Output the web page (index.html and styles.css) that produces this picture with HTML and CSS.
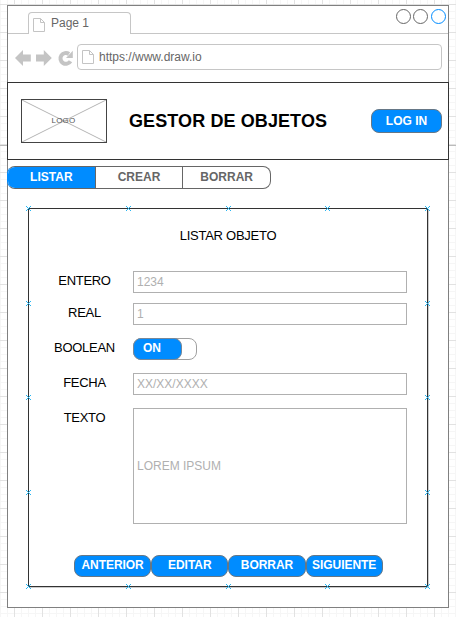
FILE: index.html
```html
<!DOCTYPE html>
<html lang="es">
<head>
<meta charset="utf-8">
<title>Gestor de objetos</title>
<link rel="stylesheet" href="styles.css">
</head>
<body>
<main class="window">
  <div class="tabstrip">
    <div class="tab">
      <svg class="doc" width="12" height="14" viewBox="0 0 12 14"><path d="M.5.5H7.5L11.5 4.500V13.500H.5ZM7.500.5V4.500H11.500"/></svg>
      <span>Page 1</span>
    </div>
    <div class="controls"><i class="dot"></i><i class="dot"></i><i class="dot dot-blue"></i></div>
  </div>
  <div class="toolbar">
    <svg class="nav" width="60" height="18" viewBox="0 0 60 18">
      <path d="M0 9L8 1V5.500H15.800V12.500H8V17Z"/>
      <path d="M36.800 9L28.800 1V5.500H21V12.500H28.800V17Z"/>
      <path class="arc" d="M55.500 12.200A5.400 5.400 0 1 1 54 5"/>
      <path d="M57.800 1.800V9H51Z"/>
    </svg>
    <div class="address">
      <svg class="doc" width="12" height="14" viewBox="0 0 12 14"><path d="M.5.5H7.500L11.500 4.500V13.500H.5ZM7.500.5V4.500H11.500"/></svg>
      <span>https://www.draw.io</span>
    </div>
  </div>
  <header class="header">
    <div class="logo">
      <svg class="cross" width="84" height="42" viewBox="0 0 84 42"><path d="M0 0L84 42M0 42L84 0"/></svg>
      <span>LOGO</span>
    </div>
    <h1>GESTOR DE OBJETOS</h1>
    <button class="btn login">LOG IN</button>
  </header>
  <nav class="segments">
    <a class="seg active">LISTAR</a><a class="seg">CREAR</a><a class="seg">BORRAR</a>
  </nav>
  <section class="panel">
    <h2>LISTAR OBJETO</h2>
    <form class="form">
      <label>ENTERO</label><div class="field">1234</div>
      <label>REAL</label><div class="field">1</div>
      <label>BOOLEAN</label><div class="toggle"><b>ON</b></div>
      <label>FECHA</label><div class="field">XX/XX/XXXX</div>
      <label>TEXTO</label><div class="field area">LOREM IPSUM</div>
    </form>
    <div class="actions">
      <button class="btn">ANTERIOR</button><button class="btn">EDITAR</button><button class="btn">BORRAR</button><button class="btn">SIGUIENTE</button>
    </div>
    <svg class="anchors" width="406" height="386" viewBox="-3 -3 406 386">
      <defs><path id="a" d="M-2.500-2.500L2.500 2.500M-2.500 2.500L2.500-2.500"/></defs>
      <use href="#a" x=".5" y=".5"/><use href="#a" x="100.500" y=".5"/><use href="#a" x="200.500" y=".5"/><use href="#a" x="299.500" y=".5"/><use href="#a" x="399.500" y=".5"/>
      <use href="#a" x=".5" y="95.500"/><use href="#a" x=".5" y="189.500"/><use href="#a" x=".5" y="284.500"/>
      <use href="#a" x="399.500" y="95.500"/><use href="#a" x="399.500" y="189.500"/><use href="#a" x="399.500" y="284.500"/>
      <use href="#a" x=".5" y="378.500"/><use href="#a" x="100.500" y="378.500"/><use href="#a" x="200.500" y="378.500"/><use href="#a" x="299.500" y="378.500"/><use href="#a" x="399.500" y="378.500"/>
    </svg>
  </section>
</main>
</body>
</html>
```

FILE: styles.css
```css
* { box-sizing: border-box; }
html, body { margin: 0; }
body {
  height: 617px;
  padding: 5px 0 0 7px;
  overflow: hidden;
  font: 12px/14px "Liberation Sans", Arial, sans-serif;
  background-color: #fff;
  background-image:
    linear-gradient(#bbb, #bbb),
    linear-gradient(90deg, #e2e2e2 1px, transparent 1px),
    linear-gradient(#e2e2e2 1px, transparent 1px),
    linear-gradient(90deg, #f6f6f6 1px, transparent 1px),
    linear-gradient(#f6f6f6 1px, transparent 1px);
  background-size: 100% 1px, 28px 28px, 28px 28px, 7px 7px, 7px 7px;
  background-position: 0 145px, 14px 0, 0 4px, 0 0, 0 4px;
  background-repeat: no-repeat, repeat, repeat, repeat, repeat;
}
.window {
  width: 442px;
  height: 603px;
  border: 1px solid #808080;
  background: #fff;
}
.tabstrip {
  display: flex;
  justify-content: space-between;
  height: 28px;
  padding: 6px 2.5px 0 20px;
  border-bottom: 1px solid #c6c6c6;
}
.tab {
  display: flex;
  align-items: center;
  gap: 6px;
  width: 103px;
  height: 22px;
  padding-left: 4px;
  border: 1px solid #c6c6c6;
  border-bottom: 0;
  border-radius: 4px 4px 0 0;
  background: #fff;
  color: #666;
}
.tab .doc { margin-top: 2px; }
.tab span { margin-top: -2px; }
.doc path { fill: none; stroke: #c4c4c4; }
.controls { display: flex; gap: 2.5px; margin-top: -3.5px; }
.dot { width: 15px; height: 15px; border: 1px solid #666; border-radius: 50%; }
.dot-blue { border-color: #008cff; }
.toolbar { display: flex; align-items: center; height: 48px; padding: 0 6px 2px 7px; }
.nav { flex: none; margin-top: 1px; fill: #c4c4c4; }
.nav .arc { fill: none; stroke: #c4c4c4; stroke-width: 4; }
.address {
  display: flex;
  align-items: center;
  gap: 5px;
  width: 365px;
  height: 26px;
  margin-left: 2px;
  padding-left: 4px;
  border: 1px solid #c6c6c6;
  border-radius: 4px;
  color: #666;
}
.header {
  display: flex;
  align-items: center;
  width: 442px;
  height: 78px;
  margin-left: -1px;
  padding: 0 6px 0 13px;
  border: 1px solid #333;
}
.logo {
  display: grid;
  place-items: center;
  width: 86px;
  height: 44px;
  border: 1px solid #444;
  color: #555;
  font-size: 8px;
  letter-spacing: .2px;
}
.logo > * { grid-area: 1 / 1; }
.logo span { margin-right: 1px; }
.cross path { stroke: #b5b5b5; }
.header h1 {
  margin: 0 auto 0 22px;
  font-size: 18px;
  line-height: 20px;
  letter-spacing: .1px;
  white-space: nowrap;
}
.btn {
  height: 23px;
  padding: 0;
  border: 1px solid #667786;
  border-radius: 8px;
  background: #008cff;
  color: #fff;
  font: bold 12px/14px "Liberation Sans", Arial, sans-serif;
}
.login { width: 71px; height: 24px; }
.segments {
  display: flex;
  width: 264px;
  height: 23px;
  margin: 6px 0 0 -1px;
  overflow: hidden;
  border: 1px solid #666;
  border-left-color: #008cff;
  border-radius: 8px;
  color: #666;
  font-weight: bold;
}
.seg {
  flex: 1;
  display: grid;
  place-items: center;
  padding: 0 0 2px;
  border-left: 1px solid #666;
}
.active { border: 0; background: #008cff; color: #fff; }
.panel {
  position: relative;
  width: 400px;
  height: 379px;
  margin: 19px 0 0 20px;
  border: 1px solid #333;
  box-shadow: 1px 1px 0 #ccc;
}
.panel h2 {
  margin: 19px 0 28px;
  text-align: center;
  font-size: 13px;
  font-weight: normal;
  line-height: 15px;
  letter-spacing: -.25px;
}
.form {
  display: grid;
  grid-template-columns: 96px 274px;
  grid-template-rows: 19px 22px 22px 22px 116px;
  column-gap: 8px;
  row-gap: 13px;
}
.form label {
  height: 22px;
  padding-left: 15px;
  font-size: 13px;
  line-height: 20px;
  letter-spacing: -.3px;
  text-align: center;
}
.field {
  display: flex;
  align-items: center;
  height: 22px;
  padding: 0 0 0 3px;
  border: 1px solid #b0b0b0;
  color: #b0b0b0;
}
.area { height: 116px; }
.toggle {
  width: 64px;
  border: 1px solid #a0a0a0;
  border-radius: 8px;
}
.toggle b {
  display: block;
  width: 49px;
  height: 22px;
  margin: -1px;
  padding-left: 9px;
  border: 1px solid #778899;
  border-radius: 8px;
  background: #008cff;
  color: #fff;
  line-height: 18px;
}
.actions { display: flex; margin: 31px 0 0 45px; }
.actions .btn { width: 77.2px; height: 22px; padding-bottom: 2px; letter-spacing: -.05px; }
.anchors { position: absolute; top: -4px; left: -4px; stroke: #29b6f2; }
```
